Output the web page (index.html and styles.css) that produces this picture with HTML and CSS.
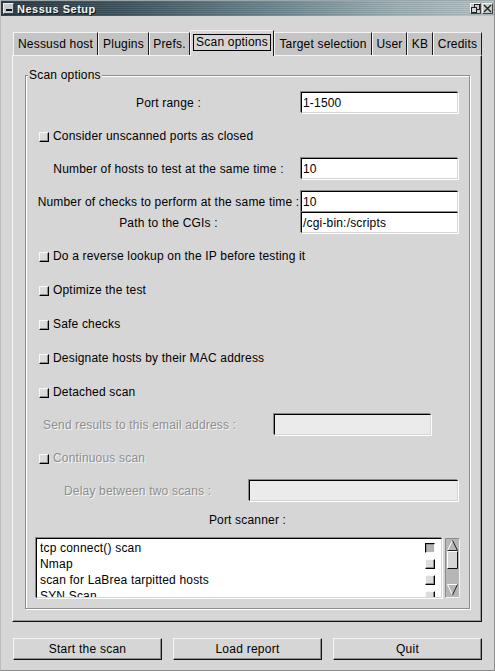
FILE: index.html
```html
<!DOCTYPE html>
<html>
<head>
<meta charset="utf-8">
<title>Nessus Setup</title>
<link rel="stylesheet" href="styles.css">
</head>
<body>
<div class="window">
  <div class="titlebar">
    <span class="tb-btn tb-min"><span class="dash"></span></span>
    <span class="title">Nessus Setup</span>
    <span class="tb-right">
      <span class="tb-btn">
        <svg width="9" height="9" viewBox="0 0 9 9"><rect x="3.5" y="0.5" width="5" height="5" fill="none" stroke="#222"/><rect x="0.5" y="3.5" width="5" height="5" fill="#cfd6d8" stroke="#222"/></svg>
      </span>
      <span class="tb-btn">
        <svg width="9" height="9" viewBox="0 0 9 9"><path d="M1 1L8 8M8 1L1 8" stroke="#222" stroke-width="1.4"/></svg>
      </span>
    </span>
  </div>
  <div class="client">
    <div class="tabs">
      <div class="tab w1">Nessusd host</div>
      <div class="tab w2">Plugins</div>
      <div class="tab w3">Prefs.</div>
      <div class="tab active w4"><span class="focus">Scan options</span></div>
      <div class="tab w5">Target selection</div>
      <div class="tab w6">User</div>
      <div class="tab w7">KB</div>
      <div class="tab w8">Credits</div>
    </div>
    <div class="notebook">
      <fieldset class="frame">
        <legend>Scan options</legend>
        <div class="lrow r-port">
          <span class="label">Port range :</span>
          <span class="entry">1-1500</span>
        </div>
        <div class="crow r-c1"><span class="check"></span><span>Consider unscanned ports as closed</span></div>
        <div class="lrow r-hosts">
          <span class="label">Number of hosts to test at the same time :</span>
          <span class="entry">10</span>
        </div>
        <div class="lrow r-checks">
          <span class="label">Number of checks to perform at the same time :</span>
          <span class="entry">10</span>
        </div>
        <div class="lrow">
          <span class="label">Path to the CGIs :</span>
          <span class="entry">/cgi-bin:/scripts</span>
        </div>
        <div class="crow"><span class="check"></span><span>Do a reverse lookup on the IP before testing it</span></div>
        <div class="crow"><span class="check"></span><span>Optimize the test</span></div>
        <div class="crow"><span class="check"></span><span>Safe checks</span></div>
        <div class="crow"><span class="check"></span><span>Designate hosts by their MAC address</span></div>
        <div class="crow"><span class="check"></span><span>Detached scan</span></div>
        <div class="drow r-mail">
          <span class="dlabel">Send results to this email address :</span>
          <span class="entry disabled"></span>
        </div>
        <div class="crow disabled-row"><span class="check"></span><span class="dtext">Continuous scan</span></div>
        <div class="drow r-delay">
          <span class="dlabel">Delay between two scans :</span>
          <span class="entry disabled"></span>
        </div>
        <div class="prow">Port scanner :</div>
        <div class="listrow">
          <div class="list">
            <div class="item"><span>tcp connect() scan</span><span class="lcheck on"></span></div>
            <div class="item"><span>Nmap</span><span class="lcheck"></span></div>
            <div class="item"><span>scan for LaBrea tarpitted hosts</span><span class="lcheck"></span></div>
            <div class="item"><span>SYN Scan</span><span class="lcheck"></span></div>
          </div>
          <svg class="scroll" width="15" height="60" viewBox="0 0 15 60">
            <rect x="0" y="0" width="15" height="60" fill="#b6b6b6"/>
            <path d="M0.5 59.5V0.5H14.5" fill="none" stroke="#8a8a8a"/>
            <path d="M14.5 0.5V59.5H0.5" fill="none" stroke="#f4f4f4"/>
            <path d="M2.5 12.5L7.5 2.5" fill="none" stroke="#fff"/>
            <path d="M7.5 2.5L12.5 12.5H2.5" fill="none" stroke="#222"/>
            <rect x="2" y="13" width="11" height="18" fill="#d6d6d6"/>
            <path d="M2.5 30.5V13.5H12.5" fill="none" stroke="#fff"/>
            <path d="M12.5 13.5V30.5H2.5" fill="none" stroke="#111"/>
            <path d="M2.5 46.5H12.5M2.5 46.5L7.5 57" fill="none" stroke="#fff"/>
            <path d="M12.5 46.5L7.5 57" fill="none" stroke="#222"/>
          </svg>
        </div>
      </fieldset>
    </div>
    <div class="buttons">
      <div class="btn">Start the scan</div>
      <div class="btn">Load report</div>
      <div class="btn">Quit</div>
    </div>
  </div>
</div>
</body>
</html>
```
FILE: styles.css
```css
* { box-sizing: border-box; }
html, body { margin: 0; padding: 0; background: #d6d6d6; }
body {
  font-family: "Liberation Sans", Arial, sans-serif;
  font-size: 12px;
  color: #000;
}
.window {
  width: 495px;
  height: 671px;
  background: #d6d6d6;
  border-left: 1px solid #bcbcbc;
  border-right: 1px solid #8a8a8a;
  border-bottom: 1px solid #8a8a8a;
  display: flex;
  flex-direction: column;
}
.titlebar {
  height: 16px;
  display: flex;
  align-items: center;
  padding: 0 1px 0 1px;
  background:
    repeating-linear-gradient(to bottom, rgba(255,255,255,0.07) 0 1px, rgba(0,0,0,0.06) 1px 2px),
    linear-gradient(to right, #27353e 0%, #3d535e 25%, #6a858e 55%, #9aaeb2 80%, #b3c1c3 100%);
  border-top: 1px solid #9aa6aa;
}
.tb-btn {
  width: 11px;
  height: 11px;
  background: #c6cbcc;
  border-top: 1px solid #f0f0f0;
  border-left: 1px solid #f0f0f0;
  border-right: 1px solid #404040;
  border-bottom: 1px solid #404040;
  display: flex;
  align-items: center;
  justify-content: center;
}
.tb-min { margin-left: 1px; }
.tb-min .dash { width: 6px; height: 2px; background: #111; margin-top: 2px; }
.title {
  margin-left: 3px;
  color: #f4f4f4;
  font-family: "Liberation Sans", sans-serif;
  font-weight: bold;
  font-size: 11px;
  letter-spacing: 0.5px;
  text-shadow: 1px 1px 0 #111;
  line-height: 14px;
}
.tb-right { margin-left: auto; display: flex; gap: 1px; }

.client {
  flex: 1;
  display: flex;
  flex-direction: column;
  padding: 0 12px 0 11px;
}
.tabs {
  display: flex;
  align-items: flex-end;
  margin-top: 13px;
  padding-left: 1px;
  height: 26px;
  position: relative;
  z-index: 2;
}
.tab {
  height: 23px;
  background: #c4c4c4;
  border-top: 1px solid #f4f4f4;
  border-left: 1px solid #f4f4f4;
  border-right: 1px solid #1a1a1a;
  display: flex;
  align-items: center;
  justify-content: center;
  white-space: nowrap;
  letter-spacing: 0.2px;
}
.tab.active {
  height: 26px;
  background: #d6d6d6;
  margin-bottom: -1px;
  padding-bottom: 2px;
}
.focus {
  border: 1px solid #000;
  padding: 1px 2px 1px 2px;
  line-height: 13px;
}
.w1 { width: 85px; }
.w2 { width: 51px; }
.w3 { width: 41px; }
.w4 { width: 84px; }
.w5 { width: 98px; }
.w6 { width: 35px; }
.w7 { width: 26px; }
.w8 { width: 49px; }

.notebook {
  height: 567px;
  border-top: 1px solid #f4f4f4;
  border-left: 1px solid #f4f4f4;
  border-right: 1px solid #111;
  border-bottom: 1px solid #111;
  box-shadow: inset -1px -1px 0 #9a9a9a;
  padding: 12px 11px 11px 12px;
}
.frame {
  margin: 0;
  padding: 0;
  height: 541px;
  border: 1px solid #8e8e8e;
  box-shadow: inset 1px 1px 0 #fff, 1px 1px 0 #fff;
  min-width: 0;
}
.frame legend {
  margin-left: 2px;
  padding: 0 1px;
  line-height: 14px;
  background: #d6d6d6;
  letter-spacing: 0.2px;
}
.label, .crow, .dlabel, .prow, .entry, .item { letter-spacing: 0.18px; }

.lrow {
  display: flex;
  align-items: center;
  height: 21px;
  margin-left: 10px;
}
.label {
  width: 265px;
  text-align: center;
  white-space: nowrap;
}
.entry {
  width: 157px;
  height: 21px;
  background: #fff;
  border-top: 1px solid #000;
  border-left: 1px solid #000;
  border-right: 1px solid #d6d6d6;
  border-bottom: 1px solid #d6d6d6;
  box-shadow: -1px -1px 0 #8a8a8a, 1px 1px 0 #fff;
  display: flex;
  align-items: center;
  padding-left: 1px;
  white-space: nowrap;
  overflow: hidden;
}
.entry.disabled { background: #ebebeb; }
.r-port { margin-top: 10px; }
.r-hosts { margin-top: 11px; }
.r-checks { margin-top: 12px; }

.crow {
  display: flex;
  align-items: center;
  height: 22px;
  margin-top: 12px;
  padding-left: 13px;
  white-space: nowrap;
}
.r-c1 { margin-top: 12px; }
.check {
  width: 10px;
  height: 10px;
  margin-right: 4px;
  margin-top: 1px;
  background: #dcdcdc;
  border-top: 1px solid #f8f8f8;
  border-left: 1px solid #f8f8f8;
  border-right: 1px solid #000;
  border-bottom: 1px solid #000;
  box-shadow: inset -1px -1px 0 #8e8e8e;
}
.dtext, .dlabel {
  color: #8e8e8e;
  text-shadow: 1px 1px 0 #f6f6f6;
}
.drow {
  display: flex;
  align-items: center;
  height: 21px;
  margin-top: 11px;
  white-space: nowrap;
}
.r-mail .dlabel { margin-left: 17px; width: 231px; }
.r-delay .dlabel { margin-left: 38px; width: 185px; }
.r-delay .entry { width: 209px; }

.prow {
  height: 18px;
  margin-top: 10px;
  text-align: center;
  line-height: 18px;
}
.listrow {
  display: flex;
  gap: 3px;
  margin-top: 9px;
  margin-left: 10px;
}
.list {
  width: 406px;
  height: 60px;
  background: #fff;
  border-top: 1px solid #000;
  border-left: 1px solid #000;
  border-right: 1px solid #d6d6d6;
  border-bottom: 1px solid #d6d6d6;
  box-shadow: -1px -1px 0 #8a8a8a, 1px 1px 0 #fff;
  overflow: hidden;
  padding: 1px 6px 0 3px;
}
.item {
  height: 16px;
  line-height: 16px;
  display: flex;
  align-items: center;
  justify-content: space-between;
  white-space: nowrap;
}
.lcheck {
  width: 10px;
  height: 10px;
  background: #dcdcdc;
  border-top: 1px solid #f8f8f8;
  border-left: 1px solid #f8f8f8;
  border-right: 1px solid #000;
  border-bottom: 1px solid #000;
  box-shadow: inset -1px -1px 0 #8e8e8e;
}
.lcheck.on {
  background: #b4b4b4;
  border-top: 1px solid #000;
  border-left: 1px solid #000;
  border-right: 1px solid #f8f8f8;
  border-bottom: 1px solid #f8f8f8;
  box-shadow: inset 1px 1px 0 #8e8e8e;
}
.scroll { display: block; }

.buttons {
  display: flex;
  gap: 11px;
  margin-top: 16px;
  padding-left: 1px;
}
.btn {
  width: 150px;
  height: 22px;
  background: #d6d6d6;
  border-top: 1px solid #f4f4f4;
  border-left: 1px solid #f4f4f4;
  border-right: 1px solid #111;
  border-bottom: 1px solid #111;
  box-shadow: inset -1px -1px 0 #8e8e8e;
  display: flex;
  align-items: center;
  justify-content: center;
  letter-spacing: 0.25px;
}
```
